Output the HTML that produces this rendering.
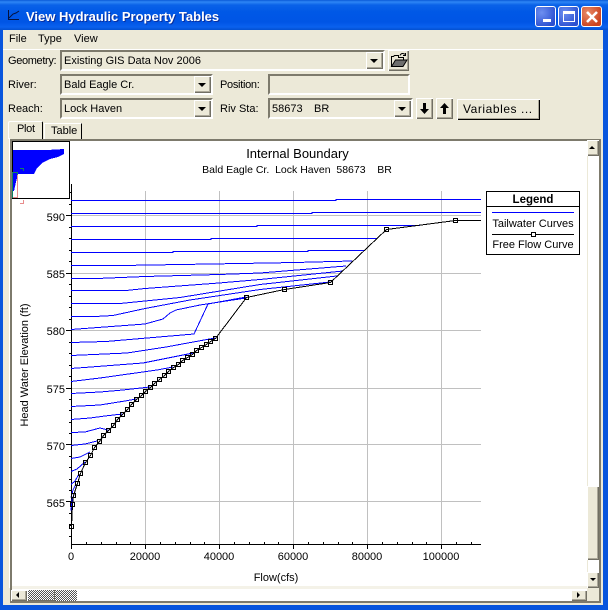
<!DOCTYPE html>
<html><head><meta charset="utf-8"><title>View Hydraulic Property Tables</title>
<style>
html,body{margin:0;padding:0;width:608px;height:610px;overflow:hidden;background:#0855dd}
*{box-sizing:border-box}
div,span{position:absolute}
body,svg text{font-family:"Liberation Sans",sans-serif}
#w{left:0;top:0;width:608px;height:610px;overflow:hidden;font-size:11px;color:#000;background:#0855dd}
#title{left:0;top:0;width:608px;height:30px;background:linear-gradient(#0a5ad8 0,#2e86f5 2px,#0a62e8 5px,#0058e6 12px,#0055e5 22px,#0a61ee 27px,#0350d0 30px)}
#tt{left:26px;top:9px;color:#fff;font-weight:bold;font-size:13px;line-height:16px;white-space:nowrap;text-shadow:1px 1px 0 #0a2f9e}
#client{left:3px;top:30px;width:600px;height:575px;background:#ece9d8}
.l{white-space:nowrap;line-height:14px;font-size:11px}
.s{background:#ece9d8;border:2px solid;border-color:#7d7a6c #fff #fff #7d7a6c}
.b{background:#ece9d8;box-shadow:inset 1px 1px 0 #fff,inset -1px -1px 0 #716f64,inset -2px -2px 0 #aca899}
.arr{width:0;height:0;border-left:4px solid transparent;border-right:4px solid transparent;border-top:4px solid #000}
.wb{top:6px;width:21px;height:21px;border:1px solid #fff;border-radius:3px}
.dith{background-color:#fff;background-image:linear-gradient(45deg,#555 25%,transparent 25%,transparent 75%,#555 75%),linear-gradient(45deg,#555 25%,transparent 25%,transparent 75%,#555 75%);background-size:2px 2px;background-position:0 0,1px 1px}
</style></head><body>
<div id="w">
<div id="title"></div>
<svg style="position:absolute;left:7px;top:9px" width="14" height="12"><path d="M1.500 1V10.500H12" fill="none" stroke="#05123e"/><path d="M2 9L6 5 9 4 12 2" fill="none" stroke="#05123e"/></svg>
<div id="tt">View Hydraulic Property Tables</div>
<div class="wb" style="left:535px;background:radial-gradient(circle at 30% 30%,#6d8ff0,#2b50d0 80%)"><div style="left:7px;top:12px;width:8px;height:3px;background:#fff"></div></div>
<div class="wb" style="left:558px;background:radial-gradient(circle at 30% 30%,#6d8ff0,#2b50d0 80%)"><div style="left:4px;top:4px;width:12px;height:11px;border:1px solid #fff;border-top-width:3px"></div></div>
<div class="wb" style="left:581px;background:radial-gradient(circle at 30% 30%,#e88a68,#cb4420 75%)"><svg style="position:absolute;left:3px;top:3px" width="14" height="14"><path d="M2 2L12 12M12 2L2 12" stroke="#fff" stroke-width="2.600"/></svg></div>

<div id="client"></div>
<div style="left:3px;top:49px;width:600px;height:1px;background:#fff"></div>
<div class="l" style="left:9px;top:32px">File</div>
<div class="l" style="left:38px;top:32px">Type</div>
<div class="l" style="left:74px;top:32px">View</div>

<div class="l" style="left:8px;top:54px;letter-spacing:-.35px">Geometry:</div>
<div class="s" style="left:60px;top:50px;width:325px;height:21px"></div>
<div class="l" style="left:64px;top:54px">Existing GIS Data Nov 2006</div>
<div class="b" style="left:366px;top:52px;width:17px;height:17px"><div class="arr" style="left:4px;top:7px"></div></div>
<div class="b" style="left:388px;top:50px;width:21px;height:21px"></div>
<svg style="position:absolute;left:390px;top:52px" width="18" height="16"><path d="M1.500 14.500V4.500H3.500L4.500 3.500H8.500V5.500H13.500V7.500" fill="#ece9d8" stroke="#000"/><path d="M1.500 14.500L5.500 8H17L13 14.500Z" fill="#6e6e6e" stroke="#000"/><path d="M10 3.500C11 1 13 1 15.500 2.500M15.500 1V3.500H13" fill="none" stroke="#000"/></svg>

<div class="l" style="left:8px;top:78px">River:</div>
<div class="s" style="left:60px;top:74px;width:153px;height:21px"></div>
<div class="l" style="left:64px;top:78px">Bald Eagle Cr.</div>
<div class="b" style="left:194px;top:76px;width:17px;height:17px"><div class="arr" style="left:4px;top:7px"></div></div>
<div class="l" style="left:220px;top:78px;letter-spacing:-.3px">Position:</div>
<div class="s" style="left:268px;top:74px;width:142px;height:21px"></div>

<div class="l" style="left:8px;top:102px">Reach:</div>
<div class="s" style="left:60px;top:98px;width:153px;height:21px"></div>
<div class="l" style="left:64px;top:102px">Lock Haven</div>
<div class="b" style="left:194px;top:100px;width:17px;height:17px"><div class="arr" style="left:4px;top:7px"></div></div>
<div class="l" style="left:220px;top:102px">Riv Sta:</div>
<div class="s" style="left:268px;top:98px;width:145px;height:21px"></div>
<div class="l" style="left:272px;top:102px;white-space:pre">58673</div>
<div class="l" style="left:314px;top:102px">BR</div>
<div class="b" style="left:394px;top:100px;width:17px;height:17px"><div class="arr" style="left:4px;top:7px"></div></div>
<div class="b" style="left:416px;top:98px;width:17px;height:21px"></div>
<svg style="position:absolute;left:416px;top:98px" width="17" height="21"><path d="M7 5H10V11H13L8.500 16 4 11H7Z" fill="#000"/></svg>
<div class="b" style="left:436px;top:98px;width:17px;height:21px"></div>
<svg style="position:absolute;left:436px;top:98px" width="17" height="21"><path d="M7 16H10V10H13L8.500 5 4 10H7Z" fill="#000"/></svg>
<div class="b" style="left:457px;top:99px;width:83px;height:21px;box-shadow:inset 1px 1px 0 #fff,inset -1px -1px 0 #000,inset -2px -2px 0 #aca899"></div>
<div class="l" style="left:463px;top:102px;font-size:12px;letter-spacing:.55px">Variables ...</div>

<!-- tabs -->
<div style="left:44px;top:123px;width:38px;height:16px;border-top:1px solid #fff;border-left:1px solid #fff;border-right:1px solid #000"></div>
<div class="l" style="left:51px;top:124px">Table</div>
<div style="left:8px;top:121px;width:35px;height:18px;background:#ece9d8;border-top:1px solid #fff;border-left:1px solid #fff;border-right:1px solid #000;border-radius:2px 2px 0 0"></div>
<div class="l" style="left:17px;top:122px;letter-spacing:-.3px">Plot</div>

<!-- panel -->
<div style="left:10px;top:139px;width:591px;height:464px;border:2px solid #7d7a6c;background:#fff"></div>
<div style="left:9px;top:138px;width:1px;height:450px;background:#fff"></div>
<div style="left:12px;top:586px;width:575px;height:3px;background:#f4f2e8"></div>

<!-- vertical scrollbar -->
<div style="left:587px;top:141px;width:12px;height:447px;background:#fff;border-left:1px solid #ece9d8"></div>
<div class="b" style="left:587px;top:140px;width:12px;height:16px"><div class="arr" style="left:2px;top:6px;border-left-width:3px;border-right-width:3px;border-top:0;border-bottom:3px solid #000"></div></div>
<div class="b" style="left:587px;top:486px;width:12px;height:74px"></div>
<div class="b" style="left:587px;top:572px;width:12px;height:16px"><div class="arr" style="left:3px;top:6px;border-left-width:3px;border-right-width:3px;border-top-width:3px"></div></div>

<!-- horizontal scrollbar -->
<div style="left:12px;top:590px;width:575px;height:11px;background:#fff"></div>
<div class="b" style="left:11px;top:590px;width:16px;height:11px"><div style="left:5px;top:2px;width:0;height:0;border-top:3px solid transparent;border-bottom:3px solid transparent;border-right:3px solid #000"></div></div>
<div class="dith" style="left:28px;top:590px;width:49px;height:11px"></div>
<div style="left:28px;top:590px;width:27px;height:11px;border-right:1px solid #716f64;border-bottom:1px solid #716f64"></div>
<div class="b" style="left:571px;top:590px;width:16px;height:11px"><div style="left:6px;top:2px;width:0;height:0;border-top:3px solid transparent;border-bottom:3px solid transparent;border-left:3px solid #000"></div></div>
<div style="left:587px;top:588px;width:12px;height:13px;background:#ece9d8"></div>

<!-- plot -->
<svg style="position:absolute;left:0;top:0" width="608" height="610" viewBox="0 0 608 610">
<defs>
<marker id="m" markerUnits="userSpaceOnUse" markerWidth="7" markerHeight="7" refX="3" refY="3"><rect x="1" y="1" width="4" height="4" fill="none" stroke="#000" stroke-width="1" shape-rendering="crispEdges"/></marker>
</defs>
<g shape-rendering="crispEdges" stroke="#c0c0c0" stroke-width="1" fill="none">
<path d="M145.500 191V544M219.500 191V544M293.500 191V544M367.500 191V544M441.500 191V544"/>
<path d="M71 215.500H481M71 273.500H481M71 330.500H481M71 388.500H481M71 444.500H481M71 501.500H481"/>
</g>
<g stroke="#000" stroke-width="1" fill="none" shape-rendering="crispEdges">
<path d="M71.500 184V544.500H481"/>
<path d="M66 215.500H71M66 273.500H71M66 330.500H71M66 388.500H71M66 444.500H71M66 501.500H71"/>
<path d="M69 192.500H71M69 204.500H71M69 227.500H71M69 238.500H71M69 250.500H71M69 261.500H71M69 284.500H71M69 296.500H71M69 307.500H71M69 319.500H71M69 342.500H71M69 353.500H71M69 365.500H71M69 376.500H71M69 399.500H71M69 410.500H71M69 422.500H71M69 433.500H71M69 456.500H71M69 467.500H71M69 479.500H71M69 490.500H71M69 513.500H71M69 525.500H71M69 536.500H71"/>
<path d="M71.500 544V549M145.500 544V549M219.500 544V549M293.500 544V549M367.500 544V549M441.500 544V549"/>
<path d="M86.500 542V544M101.500 542V544M116.500 542V544M130.500 542V544M160.500 542V544M175.500 542V544M190.500 542V544M204.500 542V544M234.500 542V544M249.500 542V544M264.500 542V544M278.500 542V544M308.500 542V544M323.500 542V544M338.500 542V544M352.500 542V544M382.500 542V544M397.500 542V544M412.500 542V544M426.500 542V544M456.500 542V544M471.500 542V544"/>
</g>
<g stroke="#0000ff" stroke-width="1" fill="none" shape-rendering="crispEdges">
<path d="M71 200.500H336V199.500H481"/>
<path d="M71 213.500H312V212.500H481"/>
<path d="M71 226.500H257V225.500H420"/>
<path d="M71 239.500H211V238.500H377"/>
<path d="M71 252.500H173V251.500H308V250.500H364"/>
<path d="M71 265.500H121L240 263.500L295 262.500L352 261"/>
<path d="M71 278.500H97L145 276.500L219 274.500L260 273L346 266"/>
<path d="M71 290.500H126L145 288.500L219 283L260 279.500L343 271"/>
<path d="M71 303.500H120L180 297.500L260 284.500L337 276"/>
<path d="M71 316.500H95L113 315.500L145 308.500L190 300L260 289.500L330 282"/>
<path d="M71 329.500L145 324L163 319L170 313L176 310L200 305L246 298"/>
<path d="M71 342.500L106 341.500L194 334L208 304L246 297"/>
<path d="M71 355.500L127 353L166 347L215 338"/>
<path d="M71 368.500L143 363L193 353"/>
<path d="M71 381.500L100 378L157 370L173 367"/>
<path d="M71 393.500L100 392L123 390L150 387"/>
<path d="M71 406.500L100 405L125 401L136 399"/>
<path d="M71 419.500L90 418L105 416L122 414"/>
<path d="M71 432.500L85 432L100 428L108 430"/>
<path d="M71 445.500L85 444L97 441"/>
<path d="M71 458.500L80 457L90 452"/>
<path d="M71 471.500L77 469L85 462"/>
<path d="M71 484.500L75 481L79 474"/>
<path d="M71 497.500L73 490L76 484"/>
<path d="M71 510.500L72 500L75 492"/>
</g>
<path shape-rendering="crispEdges" fill="none" stroke="#000" stroke-width="1" marker-start="url(#m)" marker-mid="url(#m)" d="M71.500 526.500L72.500 504.500L73.500 495.500L77.500 483.500L80.500 473.500L85.500 462.500L90.500 455.500L94.500 447.500L99.500 441.500L103.500 435.500L108.500 430.500L113.500 425.500L117.500 419.500L122.500 414.500L127.500 409.500L131.500 404.500L136.500 399.500L141.500 395.500L145.500 391.500L150.500 387.500L154.500 383.500L159.500 379.500L164.500 375.500L168.500 371.500L173.500 367.500L178.500 364.500L182.500 360.500L187.500 357.500L192.500 354.500L196.500 350.500L201.500 347.500L206.500 344.500L210.500 341.500L215.500 338.500L246.500 297.500L284.500 289.500L330.500 282.500L386.500 229.500L455.500 220.500H481"/>

<!-- axis labels -->
<g font-size="11" fill="#000" text-anchor="end" style="font-family:'Liberation Sans',sans-serif">
<text x="65" y="221">590</text><text x="65" y="278">585</text><text x="65" y="335">580</text><text x="65" y="393">575</text><text x="65" y="450">570</text><text x="65" y="507">565</text>
</g>
<g font-size="11" fill="#000" text-anchor="middle">
<text x="71" y="560">0</text><text x="145" y="560">20000</text><text x="219" y="560">40000</text><text x="293" y="560">60000</text><text x="367" y="560">80000</text><text x="441" y="560">100000</text>
<text x="276" y="581">Flow(cfs)</text>
<text transform="translate(28 365) rotate(-90)">Head Water Elevation (ft)</text>
<text x="297.500" y="158" font-size="13">Internal Boundary</text>
<text x="297" y="173" font-size="10.500" xml:space="preserve">Bald Eagle Cr.  Lock Haven  58673    BR</text>
</g>

<!-- legend -->
<rect x="486.500" y="191.500" width="93" height="63" fill="#fff" stroke="#000" shape-rendering="crispEdges"/>
<path d="M487 206.500H579" stroke="#000" shape-rendering="crispEdges"/>
<path d="M492 212.500H574" stroke="#0000ff" shape-rendering="crispEdges"/>
<path d="M492 234.500H574" stroke="#000" shape-rendering="crispEdges"/>
<rect x="531.500" y="232.500" width="4" height="4" fill="#fff" stroke="#000" shape-rendering="crispEdges"/>
<text x="533" y="203" font-size="11.500" font-weight="bold" text-anchor="middle">Legend</text>
<text x="533" y="227" font-size="11" text-anchor="middle">Tailwater Curves</text>
<text x="533" y="248" font-size="11" text-anchor="middle">Free Flow Curve</text>

<!-- minimap -->
<rect x="12.500" y="141.500" width="57" height="57" fill="#fff" stroke="#000" shape-rendering="crispEdges"/>
<path d="M13 150H47L64 149V154L58 157 50 159 42 163 37 168 34 174H18L16 182 14 191H13Z" fill="#0000ff" shape-rendering="crispEdges"/>
<rect x="12.500" y="172.500" width="5" height="25" fill="none" stroke="#e88c8c" shape-rendering="crispEdges"/>
<path d="M12.500 198V172.500H17.500V175" fill="none" stroke="#108060" shape-rendering="crispEdges"/>
<path d="M20 168.500H23.500V171" fill="none" stroke="#108060" shape-rendering="crispEdges"/>
<path d="M20 203.500H23.500V200" fill="none" stroke="#e88c8c" shape-rendering="crispEdges"/>
</svg>
</div>
</body></html>
